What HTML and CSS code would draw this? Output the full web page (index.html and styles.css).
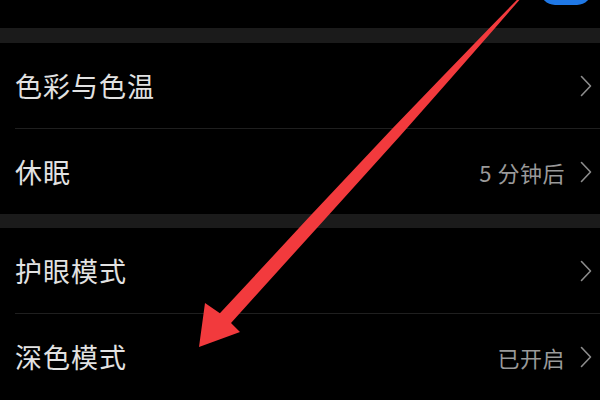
FILE: index.html
```html
<!DOCTYPE html>
<html lang="zh-CN">
<head>
<meta charset="utf-8">
<title>显示</title>
<link rel="stylesheet" href="styles.css">
</head>
<body>
<div class="screen">
  <div class="list">
    <div class="row row-top">
      <span class="label label-top">自动调节</span>
      <span class="toggle"></span>
    </div>
    <div class="band"></div>
    <div class="row">
      <span class="label">色彩与色温</span>
      <span class="meta"><svg class="chev" viewBox="0 0 12 22"><polyline points="1.5,1.5 10.5,11 1.5,20.5"/></svg></span>
    </div>
    <div class="sep"></div>
    <div class="row">
      <span class="label">休眠</span>
      <span class="meta"><span class="value">5 分钟后</span><svg class="chev" viewBox="0 0 12 22"><polyline points="1.5,1.5 10.5,11 1.5,20.5"/></svg></span>
    </div>
    <div class="band band-b"></div>
    <div class="row">
      <span class="label">护眼模式</span>
      <span class="meta"><svg class="chev" viewBox="0 0 12 22"><polyline points="1.5,1.5 10.5,11 1.5,20.5"/></svg></span>
    </div>
    <div class="sep"></div>
    <div class="row">
      <span class="label">深色模式</span>
      <span class="meta"><span class="value">已开启</span><svg class="chev" viewBox="0 0 12 22"><polyline points="1.5,1.5 10.5,11 1.5,20.5"/></svg></span>
    </div>
  </div>
  <svg class="arrow" viewBox="0 0 600 400" width="600" height="400">
    <path d="M520.6,-1.4 L492,31.5 L449,80.5 L400,136 L318.3,226.4 L231,323 L240,332 L199,347 L205,303 L219.9,313.3 L308.7,217.6 L392.2,128.8 L443.5,75.5 L489,28.5 L519.4,-2.6 Z"/>
  </svg>
</div>
</body>
</html>
```
FILE: styles.css
```css
html, body {
  margin: 0;
  padding: 0;
  background: #000;
  overflow: hidden;
}
.screen {
  position: relative;
  width: 600px;
  height: 400px;
  overflow: hidden;
  font-family: "Noto Sans CJK SC", "Noto Sans", sans-serif;
}
.list {
  margin-top: -48px;
  display: flex;
  flex-direction: column;
}
.row {
  height: 85px;
  display: flex;
  align-items: center;
  justify-content: space-between;
  padding: 0 8px 0 15px;
}
.row-top {
  height: 76px;
}
.label {
  color: #e2e2e2;
  font-size: 27px;
  line-height: 1;
  letter-spacing: 1px;
}
.label-top {
  margin-bottom: 12px;
}
.meta {
  display: flex;
  align-items: center;
  gap: 15px;
}
.value {
  color: #9a9a9a;
  font-size: 22px;
  line-height: 1;
  letter-spacing: 0.5px;
}
.chev {
  width: 12px;
  height: 22px;
  fill: none;
  stroke: #8c8c8c;
  stroke-width: 1.6;
  stroke-linecap: round;
  stroke-linejoin: round;
}
.toggle {
  width: 52px;
  height: 30px;
  border-radius: 15px;
  background: #1f78e6;
}
.band {
  height: 15px;
  background: #1b1b1b;
}
.band-b {
  height: 14px;
}
.sep {
  height: 1px;
  margin-left: 15px;
  background: #1f1f1f;
}
.arrow {
  position: absolute;
  left: 0;
  top: 0;
  fill: #f23a3d;
}
```
